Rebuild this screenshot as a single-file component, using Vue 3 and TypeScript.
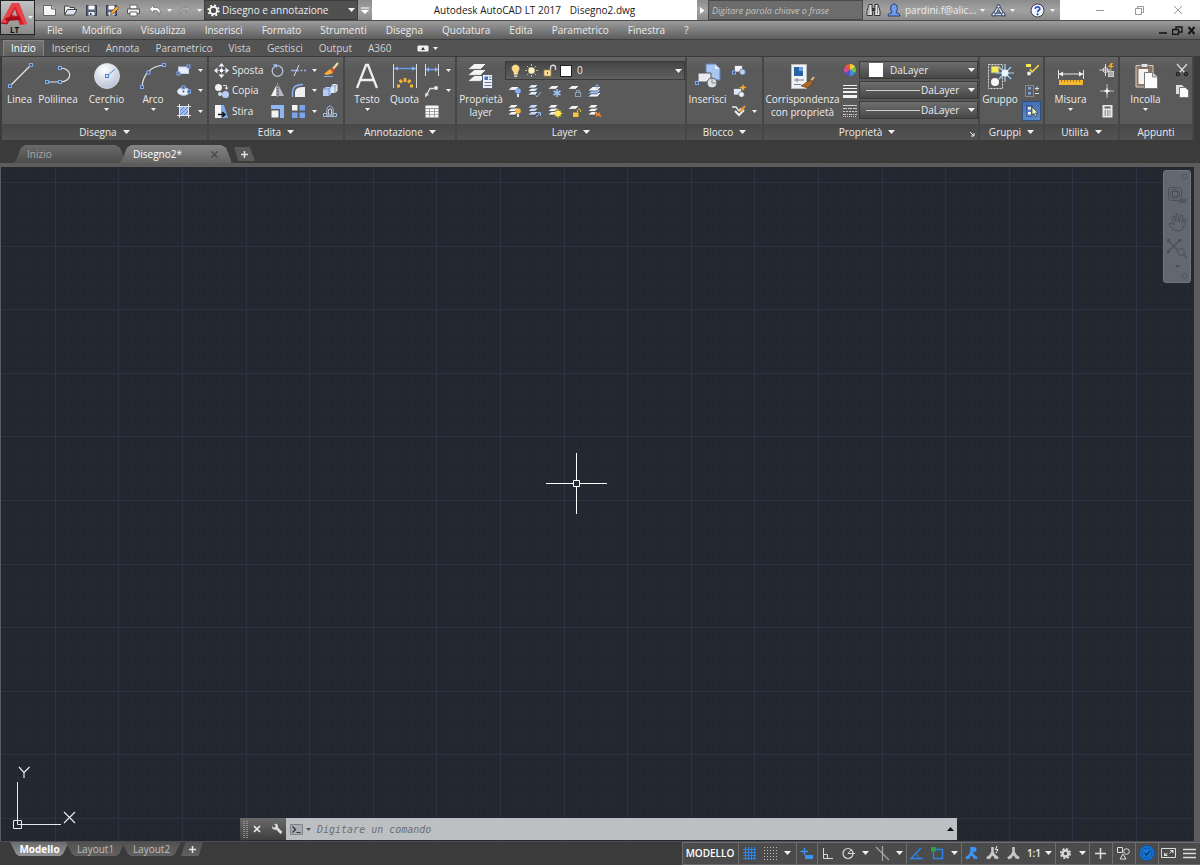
<script setup lang="ts">
import { h, ref } from 'vue'

type IconDef = [number, number, string]

const node = (x: number, y: number) =>
  `<rect x="${x - 1.5}" y="${y - 1.5}" width="3" height="3" fill="#44587c" stroke="#82aaf0"/>`
const sheet = (x: number, y: number, w: number, fill: string) =>
  `<path d="M${x + w * 0.35} ${y}H${x + w}L${x + w * 0.7} ${y + w * 0.3}H${x}z" fill="${fill}"/><path d="M${x} ${y + w * 0.3}H${x + w * 0.7}L${x + w} ${y}" fill="none" stroke="#2f3338" stroke-width=".6"/>`
const sheets = (fill: string) => sheet(0, 8, 10, fill) + sheet(0, 4.5, 10, fill) + sheet(0, 1, 10, fill)
const person = (c: string) =>
  `<path d="M7.500 1v5M7.500 6L4 12.500M7.500 6L11 12.500M2 12.500L7.500 8L13 12.500" stroke="${c}" stroke-width="2.600" fill="none"/>`

const icons: Record<string, IconDef> = {
  logo: [29, 24, '<path d="M1 21L12 1H19L27 22L20 23L18 18L11 15L7 22z" fill="#d8202c"/><path d="M12 1H19L27 22L24 22L15 4L5 22L1 21z" fill="#e8434c"/><path d="M12 13L15 7L17 14z" fill="#a8a8a8"/><path d="M5 16L19 14L21 18L6 19z" fill="#a80d1a"/><path d="M1 21L7 22L12 13" fill="none" stroke="#8f0f18"/>'],
  new: [15, 13, '<path d="M1.500 1.500H9.500L13.500 5V11.500H1.500z" fill="#f6f6f6" stroke="#666"/><path d="M9.500 1.500V5H13.500" fill="#ccc" stroke="#666"/>'],
  open: [15, 13, '<path d="M1.500 11V2H5.500L7 3.500H11.500V6" fill="#eee" stroke="#444"/><path d="M1.500 11L4.500 5.500H14L11 11z" fill="#dfe6f2" stroke="#444"/>'],
  save: [13, 13, '<path d="M1.500 1.500H11.500V11.500H1.500z" fill="#56647f" stroke="#343b4a"/><path d="M3.500 1.500H9.500V5.500H3.500z" fill="#fff"/><path d="M3.500 8H9.500V11.500H3.500z" fill="#e8ecf4"/><path d="M5 9H6.500V11H5z" fill="#343b4a"/>'],
  saveas: [15, 13, '<path d="M1.500 1.500H11.500V11.500H1.500z" fill="#56647f" stroke="#343b4a"/><path d="M3.500 1.500H9.500V5.500H3.500z" fill="#fff"/><path d="M3.500 8H9.500V11.500H3.500z" fill="#e8ecf4"/><path d="M6 8L12 2L14 4L8 10L5.500 10.500z" fill="#f0a53a" stroke="#5a3b12" stroke-width=".6"/>'],
  print: [15, 13, '<path d="M4 1H11V5H4z" fill="#fff" stroke="#666"/><path d="M1.500 5H13.500V9.500H1.500z" fill="#eee" stroke="#555"/><path d="M4 8H11V12H4z" fill="#fff" stroke="#666"/>'],
  undo: [14, 12, '<path d="M5.500 1L1.500 5L5.500 9V6.500C9 6 11 7 11 11C14 6 11 3 5.500 3.500z" fill="#fff" stroke="#555" stroke-width=".6"/>'],
  redo: [14, 12, '<path d="M8.500 1L12.500 5L8.500 9V6.500C5 6 3 7 3 11C0 6 3 3 8.500 3.500z" fill="#a9a9a9" stroke="#7c7c7c" stroke-width=".6"/>'],
  gear: [13, 13, '<circle cx="6.500" cy="6.500" r="3.600" fill="none" stroke="#fff" stroke-width="1.800"/><circle cx="6.500" cy="6.500" r="5.300" fill="none" stroke="#fff" stroke-width="1.600" stroke-dasharray="2 2.160"/>'],
  gear2: [13, 13, '<circle cx="6.500" cy="6.500" r="3" fill="none" stroke="#d4d4d4" stroke-width="2.600"/><circle cx="6.500" cy="6.500" r="4.700" fill="none" stroke="#d4d4d4" stroke-width="1.800" stroke-dasharray="2 1.690"/>'],
  down: [7, 4, '<path d="M0 0H7L3.500 4z" fill="#f2f2f2"/>'],
  down2: [5, 3, '<path d="M0 0H5L2.500 3z" fill="#f2f2f2"/>'],
  up: [7, 4, '<path d="M0 4H7L3.500 0z" fill="#111"/>'],
  right: [5, 7, '<path d="M0 0V7L4.500 3.500z" fill="#fff"/>'],
  qat: [8, 7, '<path d="M0 1H8" stroke="#fff"/><path d="M0 3H8L4 7z" fill="#fff"/>'],
  binoc: [15, 14, '<path d="M3 1.500H6V5L6.500 12.500H1V8z" fill="#e6e6e6" stroke="#333"/><path d="M12 1.500H9V5L8.500 12.500H14V8z" fill="#e6e6e6" stroke="#333"/><path d="M6 5H9V8H6z" fill="#333"/><path d="M3 3V11M11.500 3V11" stroke="#888"/>'],
  user: [14, 14, '<path d="M1 13C1 10 4 10.500 5 9.500C3 7 3 1 7 1S11 7 9 9.500C10 10.500 13 10 13 13z" fill="#6f9bf0" stroke="#25396b"/>'],
  a360: [15, 13, '<path d="M7.500 3L3 10.500H12z" fill="none" stroke="#2f3d58" stroke-width="3.400"/><path d="M7.500 3L3 10.500H12z" fill="none" stroke="#dce4f2" stroke-width="1.600"/><circle cx="7.500" cy="2.500" r="1.700" fill="#dce4f2" stroke="#2f3d58"/><circle cx="2.700" cy="10.300" r="1.700" fill="#dce4f2" stroke="#2f3d58"/><circle cx="12.300" cy="10.300" r="1.700" fill="#dce4f2" stroke="#2f3d58"/>'],
  help: [15, 15, '<circle cx="7.500" cy="7.500" r="6.500" fill="#f4f6fb" stroke="#333e55"/><path d="M5.300 6C5.300 3 9.800 3.200 9.800 5.700C9.800 7.300 7.600 7.300 7.600 9.200" fill="none" stroke="#2a52b5" stroke-width="1.700"/><circle cx="7.600" cy="11.300" r="1.100" fill="#2a52b5"/>'],
  min: [10, 10, '<path d="M1 5.500H9" stroke="#999"/>'],
  restore: [10, 10, '<path d="M1.500 3.500H7.500V9.500H1.500zM3.500 3.500V1.500H9.500V7.500H7.500" fill="none" stroke="#999"/>'],
  close: [10, 10, '<path d="M1 1L9 9M9 1L1 9" stroke="#999"/>'],
  min2: [10, 9, '<path d="M1 7H9" stroke="#161616" stroke-width="1.600"/>'],
  restore2: [11, 9, '<path d="M.500 3.500H6.500V8.500H.500zM4 3V1H10V6H7" fill="none" stroke="#161616" stroke-width="1.400"/>'],
  close2: [9, 9, '<path d="M1.500 1L7.500 8M7.500 1L1.500 8" stroke="#161616" stroke-width="2"/>'],
  ribbonmode: [12, 7, '<rect x=".5" y=".5" width="11" height="6" rx="1" fill="#f2f2f2"/><path d="M4 5H8L6 2z" fill="#333"/>'],

  line: [26, 28, '<path d="M3 24L24 3" stroke="#e4e4e4" stroke-width="1.200"/>' + node(3, 24) + node(24, 3)],
  pline: [28, 28, '<path d="M3 20H16C29 20 29 6 16 6" fill="none" stroke="#e4e4e4" stroke-width="1.200"/>' + node(3, 20) + node(16, 20) + node(16, 6)],
  circle: [28, 28, '<defs><radialGradient id="ball" cx=".4" cy=".25" r=".8"><stop offset="0" stop-color="#fff"/><stop offset="1" stop-color="#b4c0d4"/></radialGradient></defs><circle cx="14" cy="14" r="12.500" fill="url(#ball)" stroke="#eee" stroke-width=".7"/><path d="M14 14L22 7" stroke="#5c82c8"/><rect x="12.500" y="12.500" width="3" height="3" fill="#dfe8f8" stroke="#4c7fd8"/>'],
  arc: [28, 28, '<path d="M3 25C4 12 12 4 25 3" fill="none" stroke="#e4e4e4" stroke-width="1.200"/>' + node(3, 25) + node(9.5, 10.5) + node(25, 3)],
  rect: [16, 14, '<rect x="2.500" y="4" width="10" height="6.500" fill="#e8eefa" stroke="#c2cfe6"/>' + node(2.5, 10.5) + node(12.5, 3.5)],
  ellipse: [16, 14, '<ellipse cx="7.500" cy="7.500" rx="6" ry="3.800" fill="#eaf0fa" stroke="#c2cfe6"/>' + node(7.5, 3.5) + node(13, 7.5) + '<circle cx="7.500" cy="7.500" r="1" fill="#456"/>'],
  hatch: [16, 16, '<rect x="3.500" y="3.500" width="9" height="9" fill="#9dbdf0"/><path d="M3.500 1V15M12.500 1V15M1 3.500H15M1 12.500H15" stroke="#e4e4e4"/><path d="M4 8L8 4M4 12L12 4M8 12L12 8" stroke="#5b82c8"/>'],
  move: [15, 15, '<path d="M7.500 0L10.500 3.500H4.500zM7.500 15L10.500 11.500H4.500zM0 7.500L3.500 4.500V10.500zM15 7.500L11.500 4.500V10.500z" fill="#eef3fc"/><path d="M7.500 3V12M3 7.500H12" stroke="#9dbdf0"/><rect x="6" y="6" width="3" height="3" fill="#fff"/>'],
  copy: [16, 16, '<circle cx="4.500" cy="4.500" r="3.500" fill="#f2f2f2"/><circle cx="11.500" cy="11.500" r="3.500" fill="#b8cef4"/><circle cx="6" cy="11" r="2" fill="#d8dde6"/><path d="M9 2.500H12.500V5" fill="none" stroke="#ddd"/><path d="M10.500 4.500H14.500L12.500 7z" fill="#ddd"/>'],
  stretch: [15, 15, '<path d="M1 1H7V14H1z" fill="#f6f6f6"/><path d="M7 1H10L14 14H7z" fill="#7da9ee"/><path d="M4 10.500H10M8 8L11 10.500L8 13" stroke="#111" stroke-width="1.500" fill="none"/>'],
  rotate: [15, 15, '<circle cx="7.500" cy="8" r="5.300" fill="none" stroke="#b9c3d6" stroke-width="1.300"/><path d="M2.500 1.500L7 1V5z" fill="#9dbdf0"/>'],
  trim: [16, 14, '<path d="M1 7.500H6M7 7.500H9M10.500 7.500H12.500M14 7.500H16" stroke="#8fb4f2" stroke-width="1.300"/><path d="M4 13L9 2" stroke="#ddd"/>'],
  erase: [17, 16, '<path d="M16 1L10 8" stroke="#f1d7a0" stroke-width="2.200"/><path d="M11 6L13 8L8 13L5 10z" fill="#e04a2a"/><path d="M8 7L11 11L5 13L2 12z" fill="#f6b13c"/><path d="M2 14.500H11" stroke="#7da9ee"/>'],
  mirror: [15, 15, '<path d="M6.500 2V13H1z" fill="#f2f2f2"/><path d="M8.500 2V13H14z" fill="#b4b8c2"/><path d="M7.500 0V15" stroke="#79a5ec" stroke-dasharray="2 1"/>'],
  fillet: [15, 15, '<path d="M4 14V10C4 5 7 4 14 4V14z" fill="#f0f0f0"/><path d="M1.500 14V9C1.500 4 5 1.500 12 1.500" fill="none" stroke="#88b0f2" stroke-width="1.500"/>'],
  explode: [16, 15, '<path d="M1 6L4 4H9V11L7 13H1z" fill="#b4cdf5"/><path d="M9 3L11 1H15.500V8L13 10H9z" fill="#dfe8f8"/><path d="M1 6H7V13M7 6L9 4M9 3H13V10M13 3L15 1" stroke="#6481b2" fill="none" stroke-width=".7"/>'],
  scale: [15, 15, '<path d="M1 1H14V14H10V5H1z" fill="#8fb6f4"/><path d="M1.500 6.500H8.500V13.500H1.500z" fill="#f2f2f2"/>'],
  array: [15, 15, '<path d="M1 1H6.500V6.500H1z" fill="#f4f4f4"/><path d="M8.500 1H14V6.500H8.500zM1 8.500H6.500V14H1zM8.500 8.500H14V14H8.500z" fill="#78a6ee"/>'],
  offset: [16, 14, '<path d="M1.500 12.500H14.500V9.500H11C13 -.500 3 -.500 5 9.500H1.500z" fill="none" stroke="#9dbdf0"/><path d="M4 11H12M6.500 10C5 3 11 3 9.500 10" fill="none" stroke="#e4e4e4"/>'],
  text: [22, 28, '<path d="M1 26L10 3H12L21 26M4.500 18H17.500" fill="none" stroke="#efefef" stroke-width="2.300"/>'],
  dim: [26, 28, '<path d="M1.500 2V26M24.500 2V26" stroke="#ddd"/><path d="M2 6.500H24" stroke="#6b9dee" stroke-width="1.400"/><path d="M2 6.500L6 4.500V8.500zM24 6.500L20 4.500V8.500z" fill="#8db6f7"/><path d="M5 24H8M7.500 18L10 20.500M13 16V20M18.500 18L16 20.500M18 24H21" stroke="#f7b32d" stroke-width="2.800"/>'],
  dimlin: [16, 14, '<path d="M1.500 1V13M14.500 1V13" stroke="#ddd"/><path d="M2 6.500H14" stroke="#78a6ee" stroke-width="1.300"/><path d="M2 6.500L5 4V9zM14 6.500L11 4V9z" fill="#8db6f7"/>'],
  leader: [16, 14, '<path d="M2 12L6 4.500H10" fill="none" stroke="#ddd" stroke-width="1.300"/><path d="M1 13.500L1.500 8.500L5 10.500z" fill="#ddd"/><circle cx="12" cy="4" r="2" fill="#eee"/>'],
  table: [14, 13, '<path d="M.500 .500H13.500V12.500H.500z" fill="#f6f6f6"/><path d="M.500 3.500H13.500" stroke="#999"/><path d="M4.500 3V12.500M9.500 3V12.500M.500 6.500H13.500M.500 9.500H13.500" stroke="#888" stroke-width=".7"/>'],
  layerprops: [26, 28, sheet(0, 14, 18, '#f4f4f4') + sheet(0, 8, 18, '#f4f4f4') + sheet(0, 2, 18, '#f4f4f4') + '<path d="M14.500 12.500H24.500V26.500H14.500z" fill="#eef1f6" stroke="#5a6272"/><path d="M16.500 14.500H20V18H16.500z" fill="#3f74c8"/><path d="M21 15H23.500M21 17.500H23.500M16.500 20.500H23.500M16.500 23.500H23.500" stroke="#6b7690"/>'],
  bulb: [9, 14, '<path d="M3 10V8C-.500 5 1 1 4.500 1S9.500 5 6.500 8V10z" fill="#fdd97c" stroke="#fff0c0" stroke-width=".6"/><path d="M3 11H6.500M3.500 12.500H6" stroke="#ddd"/>'],
  sun: [13, 13, '<circle cx="6.500" cy="6.500" r="3.200" fill="#fff2c2"/><path d="M6.500 0V2M6.500 11V13M0 6.500H2M11 6.500H13M2 2L3.500 3.500M9.500 9.500L11 11M2 11L3.500 9.500M9.500 3.500L11 2" stroke="#c8b88c"/>'],
  unlock: [14, 13, '<rect x="1" y="6" width="7" height="6" fill="#f8e0a0" stroke="#a8843c" stroke-width=".7"/><path d="M7.500 6V3.500C7.500 .500 12.500 .500 12.500 3.500V6" fill="none" stroke="#ddd" stroke-width="1.300"/><path d="M4.500 8V10" stroke="#7a4a10"/>'],
  l1: [14, 14, sheet(0, 3, 11, '#f4f4f4') + '<circle cx="10" cy="7" r="2.800" fill="#86b2f7"/><path d="M9 10H11V13H9z" fill="#e8e8e8"/>'],
  l2: [14, 14, sheets('#e2ecfc') + '<path d="M7 10L9 13L13 8" fill="none" stroke="#8eaed8"/>'],
  l3: [14, 14, sheet(0, 2, 11, '#f4f4f4') + '<path d="M9 5V13M5.500 7L12.500 11M12.500 7L5.500 11" stroke="#9cc4f8" stroke-width="1.500"/>'],
  l4: [14, 14, sheet(0, 2, 11, '#f4f4f4') + '<rect x="7.500" y="8.500" width="5" height="4" fill="none" stroke="#8ba4bb"/><path d="M8.500 8V6.500H11.500V8" fill="none" stroke="#8ba4bb"/>'],
  l5: [14, 14, sheet(0, 9, 13, '#f0f5fd') + sheet(0, 6, 13, '#9cc0f4') + sheet(0, 3, 13, '#f4f4f4') + '<path d="M9 5V1M7 2.500L9 .500L11 2.500" fill="none" stroke="#82b0f6"/>'],
  l6: [14, 14, sheets('#f4f4f4') + '<circle cx="10" cy="7" r="2.800" fill="#f7b74a"/><path d="M9 10H11V13H9z" fill="#e8e8e8"/>'],
  l7: [14, 14, sheets('#c8daf8') + '<path d="M8 13L12 9M9 8.500H12.500V12" fill="none" stroke="#8fb6f4"/>'],
  l8: [15, 14, sheets('#f4f4f4') + '<path d="M10 5V14M5.500 9.500H14.500M7 6.500L13 12.500M13 6.500L7 12.500" stroke="#f5cc34"/><circle cx="10" cy="9.500" r="3" fill="#ffe65a"/>'],
  l9: [14, 14, sheet(0, 2, 11, '#f4f4f4') + '<rect x="5" y="8.500" width="5.500" height="4.500" fill="#f6c63a"/><path d="M9.500 8.500V6.500C9.500 4.500 12.500 4.500 12.500 6.500V8" fill="none" stroke="#f6c63a"/>'],
  l10: [14, 14, sheets('#f4f4f4') + '<path d="M7 8.500L13 12.500M8 12L12 9" stroke="#ec7f2c" stroke-width="2"/>'],
  insert: [28, 28, '<path d="M12 2H21L26 7V18H12z" fill="#a8c6f4" stroke="#6080b4"/><path d="M21 2V7H26" fill="#dfe9fa"/><path d="M4 11H17V20H4z" fill="#e8eaf0" stroke="#555"/><circle cx="18" cy="21" r="5" fill="#dcdfe6" stroke="#555"/>' + node(3, 21) + '<path d="M18 16V21H23" stroke="#888" fill="none"/>'],
  blockA: [16, 14, '<path d="M3.500 2.500H11.500V9H3.500z" fill="#f0f2f8" stroke="#555" stroke-width=".7"/><circle cx="11.500" cy="9" r="3" fill="#b8d0f6" stroke="#4a5a78" stroke-width=".7"/>' + node(3, 9.5)],
  blockB: [16, 14, '<path d="M2.500 4.500H10.500V11H2.500z" fill="#dce7fa" stroke="#555" stroke-width=".7"/><circle cx="10.500" cy="10.500" r="2.800" fill="#f0f2f8" stroke="#4a5a78" stroke-width=".7"/><path d="M12 0L13 2.500L16 3L13 4.500L12 7L10.500 4.500L8 3.500L11 2.500z" fill="#f9a92e"/>'],
  blockC: [16, 14, '<path d="M1 3H5L8 7L10 4" fill="none" stroke="#eee" stroke-width="1.300"/><path d="M4 7L8 11L13 6" fill="none" stroke="#eee" stroke-width="2"/><path d="M9 8L14 2" stroke="#e09a3a" stroke-width="2"/>'],
  match: [28, 28, '<path d="M2.500 2.500H17.500V26.500H2.500z" fill="#f2f2f2" stroke="#bbb"/><path d="M5 5H14V14H5z" fill="#2a62a8"/><path d="M10 5H14V9H10z" fill="#6ba0dc"/><path d="M5 18H15M8 16V20M5 22.500H12" stroke="#6f7f98"/><path d="M25 15L21 20" stroke="#e8c27c" stroke-width="2"/><path d="M22 18L24 21L19 26L12 24L18 20z" fill="#a8682a" stroke="#54300f" stroke-width=".6"/>'],
  wheel: [14, 14, '<path d="M7 7V1A6 6 0 0 1 12.200 4z" fill="#f6d13c"/><path d="M7 7L12.200 4A6 6 0 0 1 12.200 10z" fill="#7ac74a"/><path d="M7 7L12.200 10A6 6 0 0 1 7 13z" fill="#3f8de0"/><path d="M7 7V13A6 6 0 0 1 1.800 10z" fill="#5a4ec2"/><path d="M7 7L1.800 10A6 6 0 0 1 1.800 4z" fill="#d94a9c"/><path d="M7 7L1.800 4A6 6 0 0 1 7 1z" fill="#ea5a35"/>'],
  lweight: [14, 14, '<path d="M0 1.500H14" stroke="#f2f2f2"/><path d="M0 4.500H14" stroke="#f2f2f2"/><path d="M0 8H14" stroke="#f2f2f2" stroke-width="2"/><path d="M0 12.500H14" stroke="#f2f2f2" stroke-width="3"/>'],
  ltype: [14, 14, '<path d="M0 1.500H14" stroke="#ccc"/><path d="M0 4.500H14" stroke="#ccc" stroke-dasharray="4 1"/><path d="M0 7.500H14" stroke="#ccc" stroke-dasharray="2 1"/><path d="M0 10.500H14" stroke="#ccc" stroke-dasharray="3 1 1 1"/><path d="M0 12.500H14" stroke="#ccc" stroke-dasharray="1 1"/>'],
  launch: [6, 6, '<path d="M1 1L5 5M5 2V5H2" fill="none" stroke="#eee"/>'],
  group: [28, 28, '<path d="M2.500 2.500H16.500V26.500H2.500z" fill="none" stroke="#ddd" stroke-dasharray="2 1"/><path d="M5 4H13V11H5z" fill="#f6ec5a" stroke="#888"/><circle cx="9" cy="20" r="4" fill="#f6f6f6"/><path d="M19 2V20M10 11H28M13 5L25 17M25 5L13 17" stroke="#a8d8ff" stroke-width="1.200"/><circle cx="19" cy="11" r="3.500" fill="#e8f6ff"/>'],
  ungroup: [14, 14, '<path d="M1 1H6V4H1z" fill="#f6ec5a"/><circle cx="4" cy="10.500" r="2" fill="#eee"/><path d="M14 2L7 9L5 6" fill="none" stroke="#f5d648" stroke-width="1.500"/>'],
  groupedit: [14, 14, '<path d="M.500 1.500H8.500V12.500H.500z" fill="none" stroke="#bbb" stroke-dasharray="1 1"/><path d="M3 3H6V5.500H3zM3 8H6V10.500H3z" fill="#79a5ec"/><path d="M10 4.500H14M12 2.500V6.500M10 9.500H14" stroke="#ddd"/>'],
  groupsel: [14, 14, '<path d="M1.500 1.500H7V12.500H1.500z" fill="none" stroke="#28406c" stroke-dasharray="1 1"/><path d="M3 3H6V5.500H3zM3 8H6V10.500H3z" fill="#f4f4f4"/><path d="M7 3V11L9 9.500L10.500 13L12 12L10.500 9H13z" fill="#e9f2c0" stroke="#333" stroke-width=".7"/>'],
  measure: [28, 28, '<path d="M1.500 8V17M26.500 8V17" stroke="#e6e6e6"/><path d="M2 12H26" stroke="#e6e6e6"/><path d="M2 12L6 9.500V14.500zM26 12L22 9.500V14.500z" fill="#f2f2f2"/><path d="M2 18H26V23H2z" fill="#f5b52c"/><path d="M4.500 18V20M7.500 18V20M10.500 18V20M13.500 18V20M16.500 18V20M19.500 18V20M22.500 18V20" stroke="#8a5c08" stroke-width=".7"/>'],
  qcalc: [16, 15, '<path d="M6.500 1V13M.500 7H12.500" stroke="#ddd"/><circle cx="6.500" cy="7" r="2.500" fill="none" stroke="#ddd"/><path d="M12 0L9 4H12L10 7L15 3H12.500L14 0z" fill="#f7a52c"/><path d="M9 8H15V14H9z" fill="#e4e4e4"/><path d="M9 10H15M9 12H15M11 8V14M13 8V14" stroke="#777" stroke-width=".6"/>'],
  point: [14, 14, '<path d="M7 0V14M0 7H14" stroke="#bbb"/><path d="M7 3.500L8 6L10.500 7L8 8L7 10.500L6 8L3.500 7L6 6z" fill="#f4f4f4"/>'],
  calc: [11, 14, '<path d="M.500 1H10.500V13.500H.500z" fill="#e8e8e8"/><path d="M2.500 3.500H8.500" stroke="#666" stroke-width="2"/><path d="M2.500 7H8.500M2.500 9H8.500M2.500 11H8.500" stroke="#555" stroke-dasharray="1.500 1"/>'],
  paste: [26, 28, '<path d="M3 3.500H20V25H3z" fill="#8a7561" stroke="#d8cfc6"/><path d="M8 1.500H15V5.500H8z" fill="#e2e2e2" stroke="#666"/><path d="M5.500 7H15V22H5.500z" fill="#f2f2f2"/><path d="M11.500 10.500H19.500L24.500 15V26.500H11.500z" fill="#fbfbfb" stroke="#777"/><path d="M19.500 10.500V15H24.500" fill="#d4d4d4" stroke="#888"/>'],
  cut: [14, 14, '<path d="M2 1L10 10M12 1L4 10" stroke="#ddd" stroke-width="1.200"/><circle cx="3" cy="11" r="1.600" fill="none" stroke="#222" stroke-width="1.400"/><circle cx="11" cy="11" r="1.600" fill="none" stroke="#222" stroke-width="1.400"/>'],
  copyclip: [14, 14, '<path d="M1 1H7L9 3V10H1z" fill="#ddd"/><path d="M4.500 3.500H10.500L13.500 6.500V13.500H4.500z" fill="#fbfbfb" stroke="#777"/>'],

  x: [8, 8, '<path d="M1 1L7 7M7 1L1 7" stroke="#e8e8e8" stroke-width="1.700"/>'],
  xdark: [7, 7, '<path d="M.500 .500L6.500 6.500M6.500 .500L.500 6.500" stroke="#4a4a4a" stroke-width="1.500"/>'],
  plus: [9, 9, '<path d="M4.500 1V8M1 4.500H8" stroke="#e4e4e4" stroke-width="1.500"/>'],
  wrench: [12, 12, '<path d="M1 3L3 5L5 3L3 1C6 0 7.500 2 7 4.500L11.500 9L9.500 11L5 6.500C3 7.500 .500 6 1 3z" fill="#dcdcdc"/>'],
  prompt: [13, 11, '<path d="M.500 .500H12.500V10.500H.500z" fill="#a9adb1" stroke="#7f8387"/><path d="M2.500 2.500L5.500 5.500L2.500 8.500" fill="none" stroke="#333" stroke-width="1.300"/><path d="M6.500 8.500H10.500" stroke="#333"/>'],
  downdark: [5, 3, '<path d="M0 0H5L2.500 3z" fill="#555"/>'],
  grip: [5, 17, '<path d="M1 0V17M4 0V17" stroke="#aaa" stroke-width="1.300" stroke-dasharray="1 1"/>'],

  sgrid: [13, 13, '<path d="M2.500 0V13M5.500 0V13M8.500 0V13M11.500 0V13M0 2.500H13M0 5.500H13M0 8.500H13M0 11.500H13" stroke="#2d83e6"/>'],
  ssnap: [13, 13, '<path d="M0 .500H13M0 3.500H13M0 6.500H13M0 9.500H13M0 12.500H13" stroke="#bcbcbc" stroke-dasharray="1 2"/>'],
  sdyn: [15, 13, '<path d="M5.500 1V8M1.500 4.500H9" stroke="#3d94f5" stroke-width="1.300"/><path d="M6 8H14V12H6z" fill="#3d94f5"/>'],
  sortho: [13, 13, '<path d="M2.500 1V11.500H12M2.500 7.500H6.500V11.500" fill="none" stroke="#d8d8d8"/>'],
  spolar: [15, 13, '<circle cx="7" cy="6.500" r="5" fill="none" stroke="#d8d8d8" stroke-width="1.200"/><path d="M7 6.500H14M7 6.500L10 3" stroke="#d8d8d8"/>'],
  siso: [15, 15, '<path d="M1 1L14 14M7.500 0V15" stroke="#a8a8a8" stroke-width="1.200"/>'],
  sotrack: [15, 13, '<path d="M12 1L2 11.500H14" fill="none" stroke="#2d83e6" stroke-width="1.400"/><path d="M7 6L10 11" stroke="#2d83e6"/>'],
  sosnap: [15, 14, '<path d="M3.500 4V12.500H12.500V3.500H5" fill="none" stroke="#2d83e6" stroke-width="1.400"/><path d="M1 1H6V5.500H1z" fill="#27a53a"/>'],
  sann1: [15, 14, person('#3d94f5') + '<circle cx="10" cy="3.500" r="2.500" fill="#3d94f5"/>'],
  sann2: [15, 14, person('#c6c6c6') + '<path d="M12 0L10.500 3.500H13L11 7" fill="none" stroke="#eee"/>'],
  sann3: [15, 14, person('#c6c6c6')],
  splus: [13, 13, '<path d="M6.500 1V12M1 6.500H12" stroke="#e4e4e4" stroke-width="1.500"/>'],
  siso2: [15, 14, '<path d="M1.500 1.500H6.500V6.500H1.500z" fill="none" stroke="#ddd"/><circle cx="10.500" cy="5.500" r="2.800" fill="none" stroke="#ddd"/><path d="M7 8L10 13H4z" fill="none" stroke="#ddd"/>'],
  sperf: [16, 16, '<circle cx="8" cy="8" r="7.300" fill="#1577d8" stroke="#0a5cb4"/><circle cx="8" cy="8" r="5" fill="none" stroke="#0c4f9c"/><path d="M5.500 8L7.500 10L11 6" fill="none" stroke="#0c3460" stroke-width="1.200"/>'],
  sfull: [15, 12, '<path d="M.500 1.500H14.500V10.500H.500z" fill="none" stroke="#ddd"/><path d="M8.500 3H12.500V6.500zM3 5.500V9H7z" fill="#ddd"/><path d="M8.500 6.500L12 3M3.500 9L6.500 6" stroke="#ddd"/>'],
  smenu: [13, 11, '<path d="M0 1.500H13M0 5.500H13M0 9.500H13" stroke="#ddd" stroke-width="1.500"/>'],

  nclose: [7, 7, '<circle cx="3.500" cy="3.500" r="2.500" fill="none" stroke="#4f555e"/>'],
  nwheel: [20, 20, '<rect x="1.500" y="2.500" width="13" height="13" rx="3" fill="none" stroke="#495059"/><circle cx="8" cy="9" r="4.500" fill="none" stroke="#495059"/><path d="M5.500 6.500H10.500V11.500H5.500z" fill="none" stroke="#495059"/><path d="M12 14H19V18H12z" fill="#4f565f"/>'],
  nhand: [20, 20, '<path d="M6 18L2 12L4 11L7 13L5 5L7 4L9 10L9 2L11 2L12 10L14 3L16 4L15 11L17 7L19 8L16 16L13 19z" fill="none" stroke="#495059"/>'],
  nzoom: [20, 20, '<path d="M1 1L12 13M13 1L1 13" stroke="#495059" stroke-width="1.200"/><path d="M0 0H3V3H0zM11 0H14V3H11zM0 11H3V14H0z" fill="#495059"/><circle cx="14" cy="13" r="3.500" fill="#626973" stroke="#495059"/><path d="M16.500 15.500L20 19" stroke="#495059" stroke-width="1.500"/>'],
  ndot: [5, 3, '<path d="M0 0H5L2.500 3z" fill="#434a53"/>'],
  cross: [61, 61, '<path d="M30.500 0V27M30.500 34V61M0 30.500H27M34 30.500H61M27.500 27.500H33.500V33.500H27.500z" fill="none" stroke="#fff"/>'],
  ucs: [66, 64, '<path d="M4.500 16V54M8 58.500H48M.500 54.500H8.500V62.500H.500zM4.500 54V58.500H8" fill="none" stroke="#e6e8ea"/><path d="M6 1L11 6.500V12M16.500 1L11 6.500M51 46L62 57M62 46L51 57" fill="none" stroke="#e6e8ea" stroke-width="1.200"/>'],
}

const Ic = (p: { n: string }) => {
  const [w, ht, body] = icons[p.n]
  return h('svg', { width: w, height: ht, viewBox: `0 0 ${w} ${ht}`, 'aria-hidden': 'true', innerHTML: body })
}
Ic.props = ['n']

const menus = ['File', 'Modifica', 'Visualizza', 'Inserisci', 'Formato', 'Strumenti', 'Disegna', 'Quotatura', 'Edita', 'Parametrico', 'Finestra', '?']
const tabs = ['Inizio', 'Inserisci', 'Annota', 'Parametrico', 'Vista', 'Gestisci', 'Output', 'A360']
const activeTab = ref('Inizio')

const editRows = [
  { label: 'Sposta', icons: ['move', 'rotate', 'trim', 'erase'], more: true },
  { label: 'Copia', icons: ['copy', 'mirror', 'fillet', 'explode'], more: true },
  { label: 'Stira', icons: ['stretch', 'scale', 'array', 'offset'], more: true },
]
const layerTools = ['l1', 'l2', 'l3', 'l4', 'l5', 'l6', 'l7', 'l8', 'l9', 'l10']
const search = ref('')
const command = ref('')

const status: { items: string[]; cls?: string }[] = [
  { items: ['sgrid', 'ssnap', 'down'], cls: 'pad' },
  { items: ['sdyn'] },
  { items: ['sortho', 'spolar', 'down', 'siso', 'down'] },
  { items: ['sotrack', 'sosnap', 'down'] },
  { items: ['sann1', 'sann2', 'sann3', '1:1'] },
  { items: ['gear2', 'down'] },
  { items: ['splus'], cls: 'one' },
  { items: ['siso2'], cls: 'one' },
  { items: ['sperf'], cls: 'one' },
  { items: ['sfull', 'smenu'] },
]

// The grid repeats every 318px: 5 major cells, 25 minor cells.
const tile = 318
const minor = Array.from({ length: 25 }, (_, i) => Math.round((i * tile) / 25))
const major = Array.from({ length: 5 }, (_, i) => Math.round((i * tile) / 5))
const linePath = (at: number[]) => at.map((v) => `M${v + 0.5} 0V${tile}M0 ${v + 0.5}H${tile}`).join('')
</script>

<template>
  <div class="app">
    <header class="head">
      <button class="appbtn" aria-label="Menu applicazione">
        <span class="logo"><Ic n="logo" /><span class="lt">LT</span></span>
        <Ic n="down2" />
      </button>
      <div class="headcol">
        <div class="titlebar">
          <div class="qat">
            <button aria-label="Nuovo"><Ic n="new" /></button>
            <button aria-label="Apri"><Ic n="open" /></button>
            <button aria-label="Salva"><Ic n="save" /></button>
            <button aria-label="Salva con nome"><Ic n="saveas" /></button>
            <button aria-label="Stampa"><Ic n="print" /></button>
            <button aria-label="Annulla"><Ic n="undo" /></button>
            <button class="narrow" aria-label="Elenco annulla"><Ic n="down2" /></button>
            <button aria-label="Ripeti"><Ic n="redo" /></button>
            <button class="narrow" aria-label="Elenco ripeti"><Ic n="down2" /></button>
          </div>
          <div class="workspace">
            <Ic n="gear" />
            <select aria-label="Area di lavoro"><option>Disegno e annotazione</option></select>
            <Ic n="down" />
          </div>
          <button class="qatmore" aria-label="Personalizza"><Ic n="qat" /></button>
          <div class="title"><span>Autodesk AutoCAD LT 2017</span><span>Disegno2.dwg</span></div>
          <button class="searchtoggle" aria-label="Comprimi ricerca"><Ic n="right" /></button>
          <input v-model="search" class="search" type="text" aria-label="Ricerca" placeholder="Digitare parola chiave o frase" />
          <div class="info">
            <button aria-label="Cerca"><Ic n="binoc" /></button>
            <button class="account"><Ic n="user" /><span>pardini.f@alic...</span><Ic n="down2" /></button>
            <button class="app360" aria-label="App"><Ic n="a360" /><Ic n="down2" /></button>
            <button class="helpbtn" aria-label="Guida"><Ic n="help" /><Ic n="down2" /></button>
          </div>
          <div class="winbtns">
            <button aria-label="Riduci a icona"><Ic n="min" /></button>
            <button aria-label="Ripristina"><Ic n="restore" /></button>
            <button aria-label="Chiudi"><Ic n="close" /></button>
          </div>
        </div>
        <nav class="menubar">
          <button v-for="m in menus" :key="m">{{ m }}</button>
          <span class="docbtns">
            <button aria-label="Riduci disegno"><Ic n="min2" /></button>
            <button aria-label="Ripristina disegno"><Ic n="restore2" /></button>
            <button aria-label="Chiudi disegno"><Ic n="close2" /></button>
          </span>
        </nav>
      </div>
    </header>

    <nav class="tabs">
      <button v-for="t in tabs" :key="t" :class="{ on: activeTab === t }" @click="activeTab = t">{{ t }}</button>
      <button class="mode" aria-label="Riduci barra multifunzione"><Ic n="ribbonmode" /><Ic n="down2" /></button>
    </nav>

    <section class="ribbon">
      <div class="panel">
        <div class="body draw">
          <button class="big"><Ic n="line" /><span>Linea</span></button>
          <button class="big"><Ic n="pline" /><span>Polilinea</span></button>
          <button class="big"><Ic n="circle" /><span>Cerchio</span><Ic n="down2" /></button>
          <button class="big"><Ic n="arc" /><span>Arco</span><Ic n="down2" /></button>
          <div class="stack two">
            <button aria-label="Rettangolo"><Ic n="rect" /></button><button aria-label="Altri rettangoli"><Ic n="down2" /></button>
            <button aria-label="Ellisse"><Ic n="ellipse" /></button><button aria-label="Altre ellissi"><Ic n="down2" /></button>
            <button aria-label="Tratteggio"><Ic n="hatch" /></button><button aria-label="Altri tratteggi"><Ic n="down2" /></button>
          </div>
        </div>
        <button class="ptitle">Disegna<Ic n="down" /></button>
      </div>

      <div class="panel">
        <div class="body edit">
          <template v-for="r in editRows" :key="r.label">
            <button class="named"><span class="ibox"><Ic :n="r.icons[0]" /></span>{{ r.label }}</button>
            <button :aria-label="r.icons[1]"><Ic :n="r.icons[1]" /></button>
            <button :aria-label="r.icons[2]"><Ic :n="r.icons[2]" /></button>
            <button v-if="r.more" aria-label="Altro"><Ic n="down2" /></button>
            <button :aria-label="r.icons[3]"><Ic :n="r.icons[3]" /></button>
          </template>
        </div>
        <button class="ptitle">Edita<Ic n="down" /></button>
      </div>

      <div class="panel">
        <div class="body note">
          <button class="big"><Ic n="text" /><span>Testo</span><Ic n="down2" /></button>
          <button class="big"><Ic n="dim" /><span>Quota</span></button>
          <div class="stack two">
            <button aria-label="Lineare"><Ic n="dimlin" /></button><button aria-label="Altre quote"><Ic n="down2" /></button>
            <button aria-label="Direttrice"><Ic n="leader" /></button><button aria-label="Altre direttrici"><Ic n="down2" /></button>
            <button aria-label="Tabella"><Ic n="table" /></button>
          </div>
        </div>
        <button class="ptitle">Annotazione<Ic n="down" /></button>
      </div>

      <div class="panel">
        <div class="body layer">
          <button class="big"><Ic n="layerprops" /><span>Proprietà<br />layer</span></button>
          <div class="layercol">
            <div class="combo">
              <Ic n="bulb" /><Ic n="sun" /><Ic n="unlock" /><i class="swatch"></i>
              <select aria-label="Layer corrente"><option>0</option></select>
              <Ic n="down" />
            </div>
            <div class="ltools">
              <button v-for="l in layerTools" :key="l" aria-label="Strumento layer"><Ic :n="l" /></button>
            </div>
          </div>
        </div>
        <button class="ptitle">Layer<Ic n="down" /></button>
      </div>

      <div class="panel">
        <div class="body block">
          <button class="big"><Ic n="insert" /><span>Inserisci</span></button>
          <div class="stack two">
            <button aria-label="Crea blocco"><Ic n="blockA" /></button><span></span>
            <button aria-label="Modifica blocco"><Ic n="blockB" /></button><span></span>
            <button aria-label="Modifica attributi"><Ic n="blockC" /></button><button aria-label="Altri attributi"><Ic n="down2" /></button>
          </div>
        </div>
        <button class="ptitle">Blocco<Ic n="down" /></button>
      </div>

      <div class="panel">
        <div class="body props">
          <button class="big"><Ic n="match" /><span>Corrispondenza<br />con proprietà</span></button>
          <div class="stack">
            <button aria-label="Colore oggetto"><Ic n="wheel" /></button>
            <button aria-label="Spessore linea"><Ic n="lweight" /></button>
            <button aria-label="Tipo di linea"><Ic n="ltype" /></button>
          </div>
          <div class="combos">
            <div class="combo"><i class="swatch wide"></i><select aria-label="Colore"><option>DaLayer</option></select><Ic n="down" /></div>
            <div class="combo"><i class="rule"></i><select aria-label="Spessore"><option>DaLayer</option></select><Ic n="down" /></div>
            <div class="combo"><i class="rule"></i><select aria-label="Tipo linea"><option>DaLayer</option></select><Ic n="down" /></div>
          </div>
        </div>
        <div class="ptitle launchrow"><button>Proprietà<Ic n="down" /></button><button class="launch" aria-label="Finestra proprietà"><Ic n="launch" /></button></div>
      </div>

      <div class="panel">
        <div class="body groups">
          <button class="big"><Ic n="group" /><span>Gruppo</span></button>
          <div class="stack">
            <button aria-label="Separa"><Ic n="ungroup" /></button>
            <button aria-label="Modifica gruppo"><Ic n="groupedit" /></button>
            <button class="pressed" aria-label="Selezione gruppo" aria-pressed="true"><Ic n="groupsel" /></button>
          </div>
        </div>
        <button class="ptitle">Gruppi<Ic n="down" /></button>
      </div>

      <div class="panel">
        <div class="body utils">
          <button class="big"><Ic n="measure" /><span>Misura</span><Ic n="down2" /></button>
          <div class="stack">
            <button aria-label="Selezione rapida"><Ic n="qcalc" /></button>
            <button aria-label="Punto"><Ic n="point" /></button>
            <button aria-label="Calcolatrice"><Ic n="calc" /></button>
          </div>
        </div>
        <button class="ptitle">Utilità<Ic n="down" /></button>
      </div>

      <div class="panel">
        <div class="body clip">
          <button class="big"><Ic n="paste" /><span>Incolla</span><Ic n="down2" /></button>
          <div class="stack">
            <button aria-label="Taglia"><Ic n="cut" /></button>
            <button aria-label="Copia negli Appunti"><Ic n="copyclip" /></button>
          </div>
        </div>
        <div class="ptitle">Appunti</div>
      </div>
    </section>

    <nav class="files">
      <button class="file">Inizio</button>
      <button class="file on"><span>Disegno2*</span><Ic n="xdark" /></button>
      <button class="addfile" aria-label="Nuovo disegno"><Ic n="plus" /></button>
    </nav>

    <main class="frame">
      <div class="canvas">
        <svg class="grid" width="100%" height="100%" aria-hidden="true">
          <defs>
            <pattern id="cad-grid" x="181" y="15" :width="tile" :height="tile" patternUnits="userSpaceOnUse">
              <path class="minor" :d="linePath(minor)" />
              <path class="major" :d="linePath(major)" />
            </pattern>
          </defs>
          <rect width="100%" height="100%" fill="url(#cad-grid)" />
        </svg>
        <div class="crosshair"><Ic n="cross" /></div>
        <div class="ucs"><Ic n="ucs" /></div>
        <div class="navbar">
          <button class="end" aria-label="Chiudi barra"><Ic n="nclose" /></button>
          <button aria-label="Ruota di navigazione"><Ic n="nwheel" /></button>
          <button aria-label="Pan"><Ic n="nhand" /></button>
          <button aria-label="Zoom"><Ic n="nzoom" /></button>
          <button class="short" aria-label="Opzioni zoom"><Ic n="ndot" /></button>
          <button class="end" aria-label="Opzioni barra"><Ic n="nclose" /></button>
        </div>
        <div class="cmd">
          <div class="cmdtools">
            <Ic n="grip" />
            <button aria-label="Chiudi riga di comando"><Ic n="x" /></button>
            <button aria-label="Personalizza riga di comando"><Ic n="wrench" /></button>
          </div>
          <button class="recent" aria-label="Comandi recenti"><Ic n="prompt" /><Ic n="downdark" /></button>
          <input v-model="command" type="text" aria-label="Riga di comando" placeholder="Digitare un comando" />
          <button class="history" aria-label="Cronologia"><Ic n="up" /></button>
        </div>
      </div>
    </main>

    <footer class="foot">
      <nav class="layouts">
        <button class="lay on">Modello</button>
        <button class="lay">Layout1</button>
        <button class="lay">Layout2</button>
        <button class="lay add" aria-label="Nuovo layout"><Ic n="plus" /></button>
      </nav>
      <div class="status">
        <div class="sg"><button class="model">MODELLO</button></div>
        <div v-for="(g, gi) in status" :key="gi" class="sg" :class="g.cls">
          <template v-for="(s, si) in g.items" :key="si">
            <button v-if="s === '1:1'" class="ratio">1:1<Ic n="down" /></button>
            <button v-else :class="s === 'down' ? 'arrow' : 'sicon'" :aria-label="s === 'down' ? 'Altro' : s"><Ic :n="s" /></button>
          </template>
        </div>
      </div>
    </footer>
  </div>
</template>

<style>
body {
  margin: 0;
  background: #3b3b3b;
}
</style>

<style scoped>
.app {
  display: flex;
  flex-direction: column;
  min-height: 100vh;
  font-family: "Open Sans", "Noto Sans", sans-serif;
  font-size: 10px;
  line-height: 13px;
  color: #ececec;
  background: #3b3b3b;
}
.app *,
.app *::before {
  box-sizing: border-box;
}
button,
select,
input {
  margin: 0;
  padding: 0;
  border: 0;
  background: none;
  color: inherit;
  font: inherit;
  appearance: none;
  white-space: nowrap;
  border-radius: 0;
}
button {
  display: flex;
  align-items: center;
  justify-content: center;
}
select {
  flex: 1;
  min-width: 0;
}
svg {
  display: block;
  flex: none;
}

.head {
  display: flex;
  height: 39px;
  background: #565656;
}
.appbtn {
  width: 35px;
  height: 35px;
  gap: 1px;
  border: 1px solid #222;
  background: linear-gradient(#c2c2c2, #8a8a8a);
}
.logo {
  display: flex;
  flex-direction: column;
  align-items: center;
  width: 25px;
}
.lt {
  font-size: 8px;
  line-height: 8px;
  font-weight: 700;
  color: #111;
}
.headcol {
  flex: 1;
  min-width: 0;
}
.titlebar {
  display: flex;
  height: 21px;
  border-bottom: 1px solid #4c4c4c;
  background: linear-gradient(#8c8c8c, #a2a2a2 50%, #8a8a8a);
}
.qat {
  display: flex;
  width: 169px;
  padding-left: 4px;
}
.qat button {
  width: 21px;
}
.qat .narrow {
  width: 9px;
}
.workspace {
  display: flex;
  align-items: center;
  gap: 2px;
  width: 154px;
  padding: 0 2px;
  background: #505050;
  border: 1px solid #3c3c3c;
}
.qatmore {
  width: 14px;
}
.title {
  display: flex;
  flex: 1;
  align-items: center;
  justify-content: center;
  gap: 9px;
  background: #fff;
  color: #1a1a1a;
}
.searchtoggle {
  width: 11px;
}
.search {
  width: 155px;
  padding: 0 3px;
  background: #6c6c6c;
  border: 1px solid #4a4a4a;
  font-size: 9px;
  font-style: italic;
}
.search::placeholder {
  color: #c4c4c4;
  opacity: 1;
}
.info {
  display: flex;
  align-items: center;
  width: 197px;
  padding-left: 3px;
}
.info button {
  height: 20px;
}
.account {
  gap: 4px;
  margin-left: 6px;
}
.app360 {
  gap: 4px;
  margin-left: 6px;
}
.helpbtn {
  gap: 5px;
  margin-left: 15px;
}
.winbtns {
  display: flex;
  width: 140px;
  padding: 0 2px 0 20px;
  background: #fff;
}
.winbtns button {
  flex: 1;
}
.menubar {
  display: flex;
  gap: 19px;
  height: 18px;
  padding: 0 4px 0 12px;
  background: linear-gradient(#9c9c9c, #5e5e5e);
}
.docbtns {
  display: flex;
  gap: 4px;
  margin-left: auto;
}

.tabs {
  display: flex;
  gap: 16px;
  height: 17px;
  padding: 0 11px;
  color: #d2d2d2;
  background: #535353;
  border-top: 1px solid #3f3f3f;
}
.tabs .on {
  margin: 0 -8px;
  padding: 0 7px;
  background: linear-gradient(#747474, #5f5f5f);
  border: 1px solid #858585;
  border-bottom: 0;
  color: #fff;
}
.mode {
  gap: 4px;
  margin-left: 10px;
}

.ribbon {
  display: grid;
  grid-template-columns: 207fr 136fr 112fr 230fr 77fr 216fr 65fr 75fr 74fr;
  height: 86px;
  padding: 1px 6px 2px 2px;
  background: #3b3b3b;
}
.panel {
  display: flex;
  flex-direction: column;
  min-width: 0;
  background: linear-gradient(#646464, #5a5a5a 12px, #5a5a5a);
  border-right: 2px solid #464646;
}
.body {
  display: grid;
  height: 67px;
  padding-top: 3px;
}
.draw { grid-template-columns: 35px 42px 55px 38px 1fr; }
.edit {
  grid-template-columns: 54px 18px 24px 8px 24px;
  grid-template-rows: 20px 21px 20px;
  padding-left: 5px;
}
.note { grid-template-columns: 44px 31px 1fr; }
.layer { grid-template-columns: 48px 1fr; }
.block { grid-template-columns: 41px 1fr; }
.props { grid-template-columns: 77px 18px 1fr; }
.groups { grid-template-columns: 40px 1fr; }
.utils { grid-template-columns: 51px 1fr; }
.clip { grid-template-columns: 51px 1fr; }
.big {
  flex-direction: column;
  justify-content: flex-start;
  padding-top: 2px;
}
.big span {
  margin: 3px -4px 2px;
}
.stack {
  display: grid;
  grid-template-rows: 20px 21px 20px;
}
.stack.two {
  grid-template-columns: 24px 8px;
}
.block .stack.two {
  grid-template-columns: 22px 8px;
}
.named {
  justify-content: flex-start;
}
.ibox {
  display: flex;
  width: 18px;
}
.pressed {
  margin: 0 2px;
  background: linear-gradient(#456fb0, #5d8acb);
  border: 1px solid #2e4f86;
}
.ptitle {
  display: flex;
  align-items: center;
  justify-content: center;
  gap: 6px;
  height: 16px;
  background: linear-gradient(#484848, #535353);
}
.launchrow {
  position: relative;
  padding-right: 8px;
}
.launchrow button {
  gap: 6px;
}
.launchrow .launch {
  position: absolute;
  right: 3px;
  bottom: 3px;
}
.layercol {
  display: flex;
  flex-direction: column;
}
.combo {
  display: flex;
  align-items: center;
  gap: 5px;
  height: 18px;
  padding: 0 2px 0 6px;
  background: linear-gradient(#6e6e6e, #474747);
  border: 1px solid #3a3a3a;
}
.layercol .combo {
  height: 19px;
  margin: 1px 0;
  padding-left: 5px;
  background: linear-gradient(#454545, #606060);
}
.layercol .swatch {
  margin-left: -2px;
}
.swatch {
  width: 12px;
  height: 12px;
  background: #fff;
  border: 1px solid #222;
}
.swatch.wide {
  width: 14px;
  height: 14px;
  margin: 0 2px 0 3px;
  border: 0;
}
.rule {
  flex: 1;
  height: 1px;
  background: #ccc;
}
.rule + select {
  flex: none;
  width: 42px;
  margin-left: -4px;
}
.ltools {
  display: grid;
  grid-template-columns: repeat(5, 20px);
  grid-auto-rows: 20px;
}
.combos {
  display: flex;
  flex-direction: column;
  gap: 2px;
  padding: 1px 0;
}

.files {
  display: flex;
  align-items: flex-end;
  height: 21px;
  padding-left: 13px;
}
.file {
  justify-content: flex-start;
  width: 112px;
  height: 18px;
  padding-left: 14px;
  color: #a8a8a8;
  background: linear-gradient(#6a6a6a, #4c4c4c);
  clip-path: polygon(0 100%, 3px 85%, 8px 15%, 12px 0, calc(100% - 10px) 0, calc(100% - 5px) 15%, 100% 85%, 100% 100%);
}
.file.on {
  justify-content: space-between;
  margin-left: -6px;
  padding: 0 13px 0 14px;
  color: #fff;
  background: linear-gradient(#858585, #626262);
}
.addfile {
  width: 21px;
  height: 14px;
  margin: 0 0 2px 3px;
  background: #5a5a5a;
  clip-path: polygon(0 0, 75% 0, 100% 100%, 20% 100%);
}

.frame {
  display: flex;
  flex: 1;
  padding: 4px 6px 0 1px;
  background: #5c5c5c;
}
.canvas {
  position: relative;
  flex: 1;
  background: #222730;
}
.grid {
  position: absolute;
  inset: 0;
}
.minor {
  stroke: #252b35;
  fill: none;
}
.major {
  stroke: #2c3346;
  fill: none;
}
.crosshair {
  position: absolute;
  left: 545px;
  top: 286px;
}
.ucs {
  position: absolute;
  left: 12px;
  bottom: 11px;
}
.navbar {
  position: absolute;
  top: 3px;
  right: 3px;
  display: flex;
  flex-direction: column;
  width: 28px;
  height: 113px;
  background: #62686f;
  border: 1px solid #70767d;
  border-radius: 3px;
}
.navbar button {
  flex: 1;
}
.navbar .end {
  flex: none;
  height: 11px;
  justify-content: flex-end;
  padding-right: 2px;
}
.navbar .short {
  flex: none;
  height: 9px;
}
.cmd {
  position: absolute;
  left: 239px;
  right: 237px;
  bottom: 1px;
  display: flex;
  height: 22px;
  background: #bcc0c3;
}
.cmdtools {
  display: flex;
  align-items: center;
  gap: 10px;
  width: 46px;
  padding-left: 3px;
  background: linear-gradient(#6a6a6a, #3f3f3f);
}
.cmdtools button:first-of-type {
  margin-left: -5px;
}
.recent {
  gap: 3px;
  margin: 0 6px 0 4px;
}
.cmd input {
  flex: 1;
  min-width: 0;
  font: italic 10px "DejaVu Sans Mono", "Liberation Mono", monospace;
  color: #333;
}
.cmd input::placeholder {
  color: #6c6e70;
  opacity: 1;
}
.history {
  width: 13px;
}

.foot {
  display: flex;
  justify-content: space-between;
  height: 24px;
  border-top: 1px solid #4a4e54;
}
.layouts {
  display: flex;
  padding-left: 10px;
}
.lay {
  height: 14px;
  width: 59px;
  margin-right: -3px;
  color: #bdbdbd;
  background: linear-gradient(#505050, #626262);
  clip-path: polygon(0 0, 100% 0, calc(100% - 6px) 85%, calc(100% - 9px) 100%, 9px 100%, 6px 85%);
}
.lay.on {
  font-weight: 700;
  color: #fff;
  background: linear-gradient(#6a6a6a, #959595);
}
.lay.add {
  width: 22px;
  margin-left: 3px;
  clip-path: polygon(20% 0, 100% 0, 80% 100%, 0 100%);
}
.status {
  display: flex;
  background: #4b4b4b;
  border-bottom: 1px solid #6a6a6a;
}
.sg {
  display: flex;
  box-shadow: inset 1px 1px #6e6e6e;
}
.sg.pad {
  padding: 0 2px 0 1px;
}
.sg.one {
  padding: 0 1px;
}
.model {
  width: 56px;
  font-weight: 600;
  color: #fff;
}
.sicon {
  width: 21px;
}
.arrow {
  width: 13px;
}
.ratio {
  width: 31px;
  gap: 4px;
  font-weight: 600;
}
</style>
